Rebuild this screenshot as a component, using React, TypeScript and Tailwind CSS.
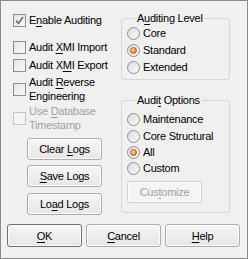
import React from 'react'

const font = "font-['Liberation_Sans',Arial,sans-serif]"

const Check = ({ checked = false, disabled = false }: { checked?: boolean; disabled?: boolean }) => (
  <span
    className={`flex h-[13px] w-[13px] shrink-0 items-center justify-center border ${
      disabled ? 'border-[#c6c6c6] bg-[#f4f4f4]' : 'border-[#8e8f8f] bg-gradient-to-br from-[#e4e4e4] to-[#fafafa]'
    }`}
  >
    {checked && (
      <svg width="11" height="11" viewBox="0 0 11 11">
        <path d="M2 5.5 L4.5 8.5 L9 2" fill="none" stroke="#6a6a6a" strokeWidth="1.6" />
      </svg>
    )}
  </span>
)

const Radio = ({ checked = false }: { checked?: boolean }) => (
  <span className="flex h-[13px] w-[13px] shrink-0 items-center justify-center rounded-full border border-[#8e8f8f] bg-gradient-to-br from-[#dcdcdc] to-[#fbfbfb]">
    {checked && (
      <span className="h-[7px] w-[7px] rounded-full border border-[#c75a0a] bg-[radial-gradient(circle_at_40%_35%,#fde2b0_0%,#f6a04a_45%,#e06a10_100%)]" />
    )}
  </span>
)

const Key = ({ children }: { children: React.ReactNode }) => (
  <span className="underline decoration-1 underline-offset-[2px]">{children}</span>
)

const CheckRow = ({
  checked,
  disabled,
  children,
  tall,
}: {
  checked?: boolean
  disabled?: boolean
  children: React.ReactNode
  tall?: boolean
}) => (
  <div className={`flex items-center gap-[3px] ${tall ? 'h-[28px]' : 'h-[14px]'}`}>
    <Check checked={checked} disabled={disabled} />
    <span className={disabled ? 'text-[#a0a0a0]' : 'text-black'}>{children}</span>
  </div>
)

const RadioRow = ({ checked, children }: { checked?: boolean; children: React.ReactNode }) => (
  <div className="flex h-[14px] items-center gap-[3px]">
    <Radio checked={checked} />
    <span>{children}</span>
  </div>
)

const Btn = ({
  children,
  disabled,
  primary,
  h = 'h-[22px]',
}: {
  children: React.ReactNode
  disabled?: boolean
  primary?: boolean
  h?: string
}) => (
  <button
    className={`flex w-[75px] ${h} items-center justify-center rounded-[3px] border shadow-[inset_0_0_0_1px_#fcfcfc] ${
      disabled
        ? 'border-[#d0d0d0] bg-[#f4f4f4] text-[#a0a0a0]'
        : primary
          ? 'border-[#6f6f6f] bg-gradient-to-b from-[#f6f6f6] to-[#e6e6e6] text-black'
          : 'border-[#adadad] bg-gradient-to-b from-[#f6f6f6] to-[#e6e6e6] text-black'
    }`}
  >
    <span>{children}</span>
  </button>
)

const Group = ({ title, children, className }: { title: React.ReactNode; children: React.ReactNode; className?: string }) => (
  <fieldset className={`w-[109px] rounded-[3px] border border-[#d5d5d5] px-[5px] ${className ?? ''}`}>
    <legend className="ml-[8px] px-[2px] leading-[14px]">{title}</legend>
    {children}
  </fieldset>
)

export default function App() {
  return (
    <div className={`flex h-[259px] w-[248px] flex-col border border-[#8c8c8c] bg-[#f0f0f0] text-[11px] leading-[14px] tracking-[-0.25px] text-black ${font}`}>
      <div className="flex">
        <div className="flex w-[120px] flex-col pl-[12px] pt-[12px]">
          <CheckRow checked>
            E<Key>n</Key>able Auditing
          </CheckRow>
          <div className="mt-[13px]">
            <CheckRow>
              Audit <Key>X</Key>MI Import
            </CheckRow>
          </div>
          <div className="mt-[4px]">
            <CheckRow>
              Audit X<Key>M</Key>I Export
            </CheckRow>
          </div>
          <div className="mt-[3px]">
            <CheckRow tall>
              Audit <Key>R</Key>everse
              <br />
              Engineering
            </CheckRow>
          </div>
          <div className="mt-[1px]">
            <CheckRow tall disabled>
              Use <Key>D</Key>atabase
              <br />
              Timestamp
            </CheckRow>
          </div>
          <div className="ml-[14px] mt-[6px] flex flex-col">
            <Btn>
              Clear <Key>L</Key>ogs
            </Btn>
            <div className="mt-[5px]">
              <Btn>
                <Key>S</Key>ave Logs
              </Btn>
            </div>
            <div className="mt-[6px]">
              <Btn>
                Lo<Key>a</Key>d Logs
              </Btn>
            </div>
          </div>
        </div>
        <div className="flex flex-col pt-[10px]">
          <Group title={<>A<Key>u</Key>diting Level</>} className="pb-[5px]">
            <div className="mt-[1px] flex flex-col gap-[3px]">
              <RadioRow>Core</RadioRow>
              <RadioRow checked>Standard</RadioRow>
              <RadioRow>Extended</RadioRow>
            </div>
          </Group>
          <Group title={<>Audi<Key>t</Key> Options</>} className="mt-[13px] pb-[9px]">
            <div className="mt-[5px] flex flex-col">
              <RadioRow>Maintenance</RadioRow>
              <div className="mt-[3px]">
                <RadioRow>Core Structural</RadioRow>
              </div>
              <div className="mt-[2px]">
                <RadioRow checked>All</RadioRow>
              </div>
              <div className="mt-[2px]">
                <RadioRow>Custom</RadioRow>
              </div>
              <div className="mt-[6px]">
                <Btn disabled>
                  Cus<Key>t</Key>omize
                </Btn>
              </div>
            </div>
          </Group>
        </div>
      </div>
      <div className="mt-[9px] flex gap-[4px] pl-[6px]">
        <Btn primary h="h-[23px]">
          <Key>O</Key>K
        </Btn>
        <Btn h="h-[23px]">
          <Key>C</Key>ancel
        </Btn>
        <Btn h="h-[23px]">
          <Key>H</Key>elp
        </Btn>
      </div>
    </div>
  )
}
